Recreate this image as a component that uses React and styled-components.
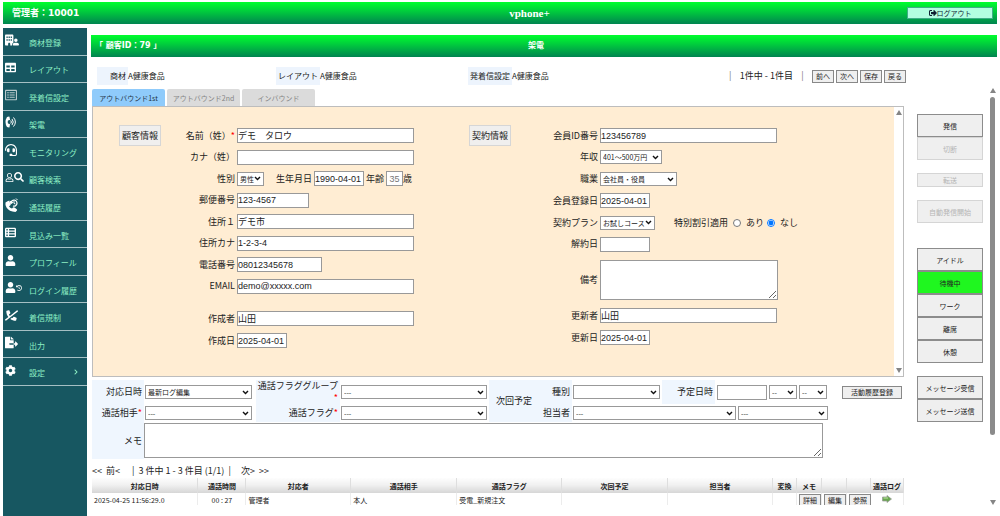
import React from "react";
import styled, { createGlobalStyle, css } from "styled-components";
import {
  FaTable,
  FaRegListAlt,
  FaHeadset,
  FaRegUser,
  FaSearch,
  FaHistory,
  FaUser,
  FaPhoneSlash,
  FaFileExport,
  FaCog,
  FaSignOutAlt,
  FaChevronRight,
} from "react-icons/fa";
import { FaBuildingUser, FaTableList } from "react-icons/fa6";

const sans = `"Noto Sans CJK JP", "Noto Sans", sans-serif`;
const arial = `"Liberation Sans", "Noto Sans CJK JP", sans-serif`;
const heading = `"DejaVu Sans", "Noto Sans CJK JP", sans-serif`;

const chevron = `url("data:image/svg+xml,%3Csvg xmlns='http://www.w3.org/2000/svg' viewBox='0 0 8 6'%3E%3Cpath d='M1 1.2 L4 4.2 L7 1.2' fill='none' stroke='%23111' stroke-width='1.7'/%3E%3C/svg%3E")`;

const GlobalStyle = createGlobalStyle`
  *, *::before, *::after { box-sizing: border-box; }
  body { margin: 0; background: #fff; color: #222; font-family: ${sans}; font-size: 9px; line-height: 12px; }
  button, input, select, textarea { margin: 0; font-family: inherit; }
`;

const Page = styled.div`
  display: flex;
  flex-direction: column;
  height: 100vh;
  padding: 2px 3px 0;
  overflow: hidden;
`;

const Bar = styled.header`
  display: grid;
  grid-template-columns: ${(p) => p.$columns};
  align-items: center;
  flex: none;
  height: 22px;
  padding: 0 4px;
  background: linear-gradient(#00ff2d, #00cf3c 40%, #008450);
  color: #fff;
  font-family: ${heading};
  font-size: 8px;
  font-weight: bold;
`;

const BarName = styled.div`
  padding-left: ${(p) => p.$indent || 0}px;
  font-size: ${(p) => (p.$large ? 9 : 8)}px;
  white-space: pre;
`;

const BarTitle = styled.h1`
  margin: 0;
  text-align: center;
  font-size: ${(p) => (p.$brand ? 11 : 8)}px;
  font-weight: bold;
  font-family: ${(p) => (p.$brand ? `"Liberation Serif", serif` : heading)};
`;

const Logout = styled.button`
  display: flex;
  align-items: center;
  justify-content: center;
  height: 12px;
  padding: 0;
  border: 1px solid #3fae86;
  background: #b3ffe0;
  color: #123;
  font-family: ${sans};
  font-size: 7px;
  line-height: 10px;
`;

const Body = styled.div`
  display: flex;
  flex: 1;
  min-height: 0;
  gap: 4px;
  padding-top: 4px;
`;

const Sidebar = styled.nav`
  flex: none;
  width: 84px;
  background: #175761;
`;

const MenuList = styled.ul`
  display: grid;
  grid-auto-rows: 1fr;
  height: 358px;
  margin: 0;
  padding: 0;
  list-style: none;
`;

const MenuItem = styled.li`
  border-bottom: 1px solid #a5c0c4;
`;

const MenuLink = styled.a`
  display: grid;
  grid-template-columns: 24px 1fr auto;
  align-items: center;
  height: 100%;
  padding: 0 8px 0 2px;
  color: #8df0c4;
  font-size: 8px;
  text-decoration: none;
  white-space: nowrap;
`;

const MenuIcon = styled.span`
  display: flex;
  align-items: center;
  padding-bottom: 3px;
  color: ${(p) => (p.$dim ? "#b9c9cc" : "#fff")};
`;

const MenuText = styled.span`
  padding-top: 3px;
`;

const Main = styled.main`
  display: flex;
  flex: 1;
  flex-direction: column;
  min-width: 0;
  padding: 7px 0 11px;
`;

const InfoRow = styled.div`
  display: grid;
  grid-template-columns: 179fr 192fr 261fr 177px;
  align-items: center;
  flex: none;
  height: 30px;
  padding: 8px 91px 0 6px;
  font-size: 8px;
`;

const Info = styled.div`
  display: flex;
  align-items: center;
`;

const InfoLabel = styled.span`
  min-width: 31px;
  padding: 3px 2px;
  background: #edf4fd;
  text-align: right;
`;

const Pager = styled.div`
  display: flex;
  align-items: center;
  justify-content: space-between;
  font-size: 9px;
  white-space: nowrap;
`;

const Separator = styled.span`
  color: #777;
`;

const ButtonGroup = styled.span`
  display: flex;
  gap: 2px;
`;

const SmallButton = styled.button`
  width: ${(p) => p.$width || 22}px;
  height: 13px;
  padding: 0;
  border: 1px solid #888;
  background: #efefef;
  color: #222;
  font-size: 7px;
  line-height: 10px;
`;

const ScrollArea = styled.div`
  display: flex;
  flex: 1;
  min-height: 0;
  overflow: hidden;
`;

const Content = styled.div`
  flex: 1;
  min-width: 0;
  padding: 2px 0 0 1px;
`;

const Tabs = styled.div`
  display: flex;
  gap: 2px;
`;

const Tab = styled.button`
  width: 73px;
  height: 17px;
  padding: 0;
  border: 0;
  border-radius: 2px 2px 0 0;
  background: ${(p) => (p.$active ? "#8fcbfb" : "#dbdbdb")};
  color: ${(p) => (p.$active ? "#1f3347" : "#858585")};
  font-size: 7px;
`;

const Panel = styled.section`
  display: flex;
  height: 271px;
  border: 1px solid #bdbdbd;
`;

const PanelBody = styled.div`
  display: grid;
  grid-template-columns: 376fr 425fr;
  flex: 1;
  background: #ffedd3;
`;

const Section = styled.div`
  display: flex;
  align-items: flex-start;
  padding: 18px 0 0 ${(p) => p.$indent || 0}px;
`;

const SectionTitle = styled.h2`
  flex: none;
  width: 42px;
  margin: 0;
  padding: 3px 0;
  border: 1px solid #d6d6d6;
  background: #f0efee;
  font-size: 9px;
  font-weight: normal;
  line-height: 13px;
  text-align: center;
`;

const Fields = styled.div`
  display: flex;
  flex: 1;
  flex-direction: column;
  gap: ${(p) => p.$gap}px;
  padding-top: 3px;
`;

const FieldGroup = styled.div`
  display: flex;
  flex-direction: column;
  justify-content: space-between;
  height: ${(p) => p.$height}px;
`;

const Field = styled.div`
  display: flex;
  align-items: center;
  min-height: 15px;
  white-space: nowrap;
`;

const FieldLabel = styled.label`
  flex: none;
  width: ${(p) => p.$width}px;
  padding-right: 2px;
  text-align: right;
`;

const InlineLabel = styled.label`
  padding: 0 2px 0 ${(p) => p.$space || 2}px;
`;

const RadioLabel = styled.label`
  display: flex;
  align-items: center;
  gap: 5px;
  padding-left: 3px;
`;

const Required = styled.span`
  color: #f00;
`;

const control = css`
  width: ${(p) => (p.$width ? `${p.$width}px` : "100%")};
  height: 15px;
  border: 1px solid #999;
  border-radius: 0;
  background-color: #fff;
  color: #222;
`;

const Input = styled.input`
  ${control}
  padding: 0;
  font-family: ${arial};
  font-size: 9px;
  &:disabled { color: #777; text-align: center; }
`;

const Select = styled.select`
  ${control}
  appearance: none;
  height: 14px;
  padding: 0 8px 0 2px;
  background-image: ${chevron};
  background-position: right 2px center;
  background-repeat: no-repeat;
  background-size: 7px 5px;
  font-size: 7px;
`;

const TextArea = styled.textarea`
  ${control}
  display: block;
  height: ${(p) => p.$height}px;
  padding: 1px;
  font-family: ${arial};
  font-size: 9px;
`;

const Radio = styled.input`
  width: 8px;
  height: 8px;
`;

const PanelScroll = styled.div`
  display: flex;
  flex-direction: column;
  align-items: center;
  justify-content: space-between;
  width: 9px;
  padding: 3px 0;
  background: #fff;
`;

const PageScroll = styled.div`
  display: flex;
  flex-direction: column;
  align-items: center;
  flex: none;
  width: 9px;
  padding: 1px 0 0;
`;

const Thumb = styled.div`
  flex: 337;
  width: 5px;
  margin-top: 3px;
  border-radius: 3px;
  background: #8b8b8b;
`;

const Track = styled.div`
  flex: 64;
`;

const LogForm = styled.form`
  display: grid;
  grid-template-columns: 52px 112fr 84px 149fr 45px 38px 332fr;
  grid-template-rows: 24px 18px 37px;
  padding-top: 3px;
`;

const LogLabel = styled.label`
  display: flex;
  flex-direction: column;
  align-items: flex-end;
  justify-content: center;
  grid-row: span ${(p) => p.$rows || 1};
  padding-right: 2px;
  background: #eff6fe;
  line-height: 12px;
  white-space: nowrap;
`;

const LogCell = styled.div`
  display: flex;
  align-items: center;
  gap: 2px;
  padding: 0 ${(p) => p.$end || 0}px 0 1px;
`;

const MemoCell = styled.div`
  grid-column: 2 / -1;
  padding: 1px 81px 1px 0;
`;

const DateLabel = styled.label`
  align-self: stretch;
  display: flex;
  align-items: center;
  width: 53px;
  padding-left: 15px;
  background: #eff6fe;
  white-space: nowrap;
`;

const PushRight = styled.span`
  display: flex;
  margin-left: auto;
  padding-right: 2px;
`;

const LogPager = styled.div`
  padding: 6px 0 1px;
  white-space: pre;
`;

const LogTable = styled.table`
  width: 100%;
  border-collapse: collapse;
  table-layout: fixed;
  font-size: 7px;
  line-height: 10px;
  white-space: nowrap;
`;

const Th = styled.th`
  height: 15px;
  padding: 0;
  border-right: 1px solid #dedede;
  background: linear-gradient(#fdfdfd, #f1f1f1 45%, #d6d6d6);
  font-weight: bold;
`;

const Td = styled.td`
  height: 14px;
  padding: 0 2px;
  border-right: 1px solid #ececec;
  text-align: ${(p) => p.$align || "left"};
`;

const Controls = styled.aside`
  display: flex;
  flex: none;
  flex-direction: column;
  gap: 13px;
  width: 66px;
  margin: 27px 5px 0 13px;
`;

const ControlGroup = styled.div`
  display: flex;
  flex-direction: column;
  padding-top: ${(p) => p.$space || 0}px;
`;

const ControlButton = styled.button`
  height: ${(p) => (p.$slim ? 14 : 23)}px;
  padding: 0;
  border: 1px solid #8c8c8c;
  background: ${(p) => (p.$on ? "#1ff71f" : "#efefef")};
  color: #222;
  font-size: 7px;
  &:disabled { border-color: #d5d5d5; color: #b5b5b5; }
`;

const Arrow = ({ down }) => (
  <svg width="6" height="6" viewBox="0 0 6 6" aria-hidden="true">
    <path d={down ? "M0 1h6L3 6z" : "M0 5h6L3 0z"} fill="#858585" />
  </svg>
);

const PhoneHistory = () => (
  <svg width="13" height="14" viewBox="0 0 26 28" aria-hidden="true">
    <path
      d="M1 9 L6 6 Q8 5 9 7 L11 12 Q12 14 10 15 L8 17 Q10 20 14 21 L16 19 Q17 18 19 19 L23 22 Q25 23 24 25 L21 28 Q8 27 3 19 Q0 14 1 9Z"
      fill="#fff"
    />
    <path d="M12 10a6 6 0 1 1 4 6" fill="none" stroke="#fff" strokeWidth="2.6" />
    <path d="M9 5 L11 13 L17 9Z" fill="#fff" />
    <path d="M18 6v5l3 1M22 1l3 3" fill="none" stroke="#fff" strokeWidth="2" />
  </svg>
);

const PhoneWaves = () => (
  <svg width="12" height="12" viewBox="0 0 24 24" aria-hidden="true">
    <path
      d="M4 2 L8 1 Q9 1 9 2 L10 7 Q10 8 9 8 L6 9 Q5 12 6 15 L9 16 Q10 16 10 17 L9 22 Q9 23 8 23 L4 22 Q-2 12 4 2Z"
      fill="#fff"
    />
    <path
      d="M12 9.500q2 2.500 0 5M14.500 6.500q4.500 5.500 0 11M17.500 3.500q7 8.500 0 17"
      fill="none"
      stroke="#fff"
      strokeWidth="2"
      strokeLinecap="round"
    />
  </svg>
);

const PhoneBlocked = styled(FaPhoneSlash)`
  transform: scaleX(-1);
`;

const GreenArrow = () => (
  <svg width="10" height="8" viewBox="0 0 20 16" role="img" aria-label="通話ログ">
    <path d="M1 4h9V1l9 7-9 7v-3H1z" fill="#69a84f" stroke="#999" strokeWidth="1.5" />
    <path d="M3 6h9" stroke="#bfe3a4" strokeWidth="2" />
  </svg>
);

const menu = [
  { text: "商材登録", icon: <FaBuildingUser size={14} /> },
  { text: "レイアウト", icon: <FaTable size={11} /> },
  { text: "発着信設定", icon: <FaRegListAlt size={12} />, dim: true },
  { text: "架電", icon: <PhoneWaves /> },
  { text: "モニタリング", icon: <FaHeadset size={12} /> },
  { text: "顧客検索", icon: <><FaRegUser size={9} /><FaSearch size={10} /></> },
  { text: "通話履歴", icon: <PhoneHistory /> },
  { text: "見込み一覧", icon: <FaTableList size={11} /> },
  { text: "プロフィール", icon: <FaUser size={11} /> },
  { text: "ログイン履歴", icon: <><FaUser size={11} /><FaHistory size={6} /></> },
  { text: "着信規制", icon: <PhoneBlocked size={13} /> },
  { text: "出力", icon: <FaFileExport size={13} /> },
  { text: "設定", icon: <FaCog size={11} />, more: true },
];

const columns = [
  ["対応日時", 106],
  ["通話時間", 48],
  ["対応者", 105],
  ["通話相手", 106],
  ["通話フラグ", 105],
  ["次回予定", 106],
  ["担当者", 105],
  ["変換", 24],
  ["メモ", 25],
  ["", 25],
  ["", 24],
  ["通話ログ", 33],
];

const controlGroups = [
  { items: [{ text: "発信" }, { text: "切断", disabled: true }] },
  { items: [{ text: "転送", disabled: true, slim: true }] },
  { items: [{ text: "自動発信開始", disabled: true }] },
  {
    space: 12,
    items: [
      { text: "アイドル" },
      { text: "待機中", on: true },
      { text: "ワーク" },
      { text: "離席" },
      { text: "休憩" },
    ],
  },
  { items: [{ text: "メッセージ受信" }, { text: "メッセージ送信" }] },
];

const TextField = ({ id, label, labelWidth, width, value, required }) => (
  <Field>
    <FieldLabel htmlFor={id} $width={labelWidth}>
      {label}
      {required && <Required>*</Required>}
    </FieldLabel>
    <Input id={id} $width={width} defaultValue={value} />
  </Field>
);

const SelectField = ({ id, label, labelWidth, width, value, children }) => (
  <Field>
    <FieldLabel htmlFor={id} $width={labelWidth}>{label}</FieldLabel>
    <Select id={id} $width={width}><option>{value}</option></Select>
    {children}
  </Field>
);

const CustomerSection = () => (
  <Section $indent={26}>
    <SectionTitle>顧客情報</SectionTitle>
    <Fields $gap={17}>
      <FieldGroup $height={166}>
        <TextField id="name" label="名前（姓）" labelWidth={76} width={177} value="デモ　タロウ" required />
        <TextField id="kana" label="カナ（姓）" labelWidth={76} width={177} value="" />
        <SelectField id="sex" label="性別" labelWidth={76} width={27} value="男性">
          <InlineLabel htmlFor="birth" $space={12}>生年月日</InlineLabel>
          <Input id="birth" $width={50} defaultValue="1990-04-01" />
          <InlineLabel htmlFor="age">年齢</InlineLabel>
          <Input id="age" $width={17} defaultValue="35" disabled />
          歳
        </SelectField>
        <TextField id="zip" label="郵便番号" labelWidth={76} width={72} value="123-4567" />
        <TextField id="address" label="住所１" labelWidth={76} width={177} value="デモ市" />
        <TextField id="addressKana" label="住所カナ" labelWidth={76} width={177} value="1-2-3-4" />
        <TextField id="tel" label="電話番号" labelWidth={76} width={85} value="08012345678" />
        <TextField id="email" label="EMAIL" labelWidth={76} width={177} value="demo@xxxxx.com" />
      </FieldGroup>
      <FieldGroup $height={37}>
        <TextField id="creator" label="作成者" labelWidth={76} width={177} value="山田" />
        <TextField id="created" label="作成日" labelWidth={76} width={50} value="2025-04-01" />
      </FieldGroup>
    </Fields>
  </Section>
);

const ContractSection = () => (
  <Section>
    <SectionTitle>契約情報</SectionTitle>
    <Fields $gap={8}>
      <FieldGroup $height={124}>
        <TextField id="memberId" label="会員ID番号" labelWidth={89} width={177} value="123456789" />
        <SelectField id="income" label="年収" labelWidth={89} width={62} value="401〜500万円" />
        <SelectField id="job" label="職業" labelWidth={89} width={77} value="会社員・役員" />
        <TextField id="joined" label="会員登録日" labelWidth={89} width={50} value="2025-04-01" />
        <SelectField id="plan" label="契約プラン" labelWidth={89} width={55} value="お試しコース">
          <InlineLabel as="span" $space={19}>特別割引適用</InlineLabel>
          <RadioLabel><Radio type="radio" name="discount" />あり</RadioLabel>
          <RadioLabel><Radio type="radio" name="discount" defaultChecked />なし</RadioLabel>
        </SelectField>
        <TextField id="cancelled" label="解約日" labelWidth={89} width={50} value="" />
      </FieldGroup>
      <Field>
        <FieldLabel htmlFor="note" $width={89}>備考</FieldLabel>
        <TextArea id="note" $width={178} $height={40} />
      </Field>
      <FieldGroup $height={37}>
        <TextField id="updater" label="更新者" labelWidth={89} width={177} value="山田" />
        <TextField id="updated" label="更新日" labelWidth={89} width={50} value="2025-04-01" />
      </FieldGroup>
    </Fields>
  </Section>
);

const ActivityForm = () => (
  <LogForm>
    <LogLabel htmlFor="logDate">対応日時</LogLabel>
    <LogCell $end={4}><Select id="logDate"><option>最新ログ編集</option></Select></LogCell>
    <LogLabel htmlFor="flagGroup">通話フラググループ<Required>*</Required></LogLabel>
    <LogCell $end={2}><Select id="flagGroup"><option>---</option></Select></LogCell>
    <LogLabel as="div" $rows={2}>次回予定</LogLabel>
    <LogLabel htmlFor="kind">種別</LogLabel>
    <LogCell>
      <Select id="kind" $width={87} />
      <DateLabel htmlFor="nextDate">予定日時</DateLabel>
      <Input id="nextDate" $width={50} />
      <Select $width={28} aria-label="時"><option>--</option></Select>
      <Select $width={28} aria-label="分"><option>--</option></Select>
      <PushRight><SmallButton type="button" $width={60}>活動履歴登録</SmallButton></PushRight>
    </LogCell>

    <LogLabel htmlFor="partner"><span>通話相手<Required>*</Required></span></LogLabel>
    <LogCell $end={4}><Select id="partner"><option>---</option></Select></LogCell>
    <LogLabel htmlFor="flag"><span>通話フラグ<Required>*</Required></span></LogLabel>
    <LogCell $end={2}><Select id="flag"><option>---</option></Select></LogCell>
    <LogLabel htmlFor="staff">担当者</LogLabel>
    <LogCell>
      <Select id="staff" $width={163}><option>---</option></Select>
      <Select $width={90} aria-label="担当者名"><option>---</option></Select>
    </LogCell>

    <LogLabel htmlFor="memo">メモ</LogLabel>
    <MemoCell><TextArea id="memo" $height={35} /></MemoCell>
  </LogForm>
);

const History = () => (
  <LogTable>
    <colgroup>
      {columns.map(([, width], i) => <col key={i} style={{ width: `${(width / 812) * 100}%` }} />)}
    </colgroup>
    <thead>
      <tr>{columns.map(([title], i) => <Th key={i}>{title}</Th>)}</tr>
    </thead>
    <tbody>
      <tr>
        <Td>2025-04-25 11:56:29.0</Td>
        <Td $align="center">00 : 27</Td>
        <Td>管理者</Td>
        <Td>本人</Td>
        <Td>受電_新規注文</Td>
        <Td />
        <Td />
        <Td />
        <Td><SmallButton>詳細</SmallButton></Td>
        <Td><SmallButton>編集</SmallButton></Td>
        <Td><SmallButton>参照</SmallButton></Td>
        <Td $align="center"><GreenArrow /></Td>
      </tr>
    </tbody>
  </LogTable>
);

export default function App() {
  return (
    <Page>
      <GlobalStyle />
      <Bar $columns="145px 1fr 86px">
        <BarName $indent={5} $large>管理者：10001</BarName>
        <BarTitle $brand>vphone+</BarTitle>
        <Logout type="button"><FaSignOutAlt size={8} />ログアウト</Logout>
      </Bar>
      <Body>
        <Sidebar>
          <MenuList>
            {menu.map(({ text, icon, dim, more }) => (
              <MenuItem key={text}>
                <MenuLink href="#">
                  <MenuIcon $dim={dim}>{icon}</MenuIcon>
                  <MenuText>{text}</MenuText>
                  {more && <FaChevronRight size={6} />}
                </MenuLink>
              </MenuItem>
            ))}
          </MenuList>
        </Sidebar>
        <Main>
          <Bar as="div" $columns="80px 1fr 96px">
            <BarName>「 顧客ID：79 」</BarName>
            <BarTitle as="h2">架電</BarTitle>
          </Bar>
          <InfoRow>
            <Info><InfoLabel>商材</InfoLabel>A健康食品</Info>
            <Info><InfoLabel>レイアウト</InfoLabel>A健康食品</Info>
            <Info><InfoLabel>発着信設定</InfoLabel>A健康食品</Info>
            <Pager>
              <Separator>|</Separator>
              <span>1件中 - 1件目</span>
              <Separator>|</Separator>
              <ButtonGroup>
                <SmallButton>前へ</SmallButton>
                <SmallButton>次へ</SmallButton>
                <SmallButton>保存</SmallButton>
                <SmallButton>戻る</SmallButton>
              </ButtonGroup>
            </Pager>
          </InfoRow>
          <ScrollArea>
            <Content>
              <Tabs>
                <Tab $active>アウトバウンド1st</Tab>
                <Tab>アウトバウンド2nd</Tab>
                <Tab>インバウンド</Tab>
              </Tabs>
              <Panel>
                <PanelBody>
                  <CustomerSection />
                  <ContractSection />
                </PanelBody>
                <PanelScroll><Arrow /><Arrow down /></PanelScroll>
              </Panel>
              <ActivityForm />
              <LogPager>{"<<  前<      |  3 件中 1 - 3 件目 (1/1)  |     次>  >>"}</LogPager>
              <History />
            </Content>
            <Controls>
              {controlGroups.map(({ items, space }, i) => (
                <ControlGroup key={i} $space={space}>
                  {items.map(({ text, on, slim, disabled }) => (
                    <ControlButton key={text} $on={on} $slim={slim} disabled={disabled}>{text}</ControlButton>
                  ))}
                </ControlGroup>
              ))}
            </Controls>
            <PageScroll><Arrow /><Thumb /><Track /><Arrow down /></PageScroll>
          </ScrollArea>
        </Main>
      </Body>
    </Page>
  );
}
